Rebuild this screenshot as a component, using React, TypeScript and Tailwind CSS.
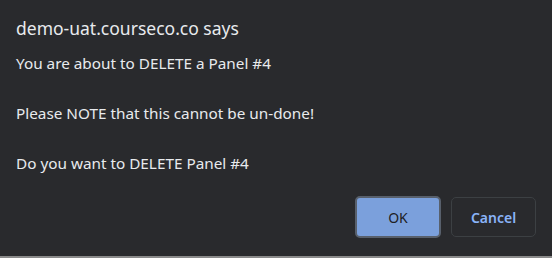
import React from "react";

export default function App() {
  return (
    <div
      className="w-[552px] h-[258px] bg-[#292a2d] flex flex-col border-b-2 border-[#8a8a8a]"
      style={{ fontFamily: '"Noto Sans", "Open Sans", sans-serif' }}
    >
      <div className="pl-4 pt-[14px] text-[17.5px] leading-[28px] text-[#e8eaed]">
        demo-uat.courseco.co says
      </div>
      <div className="pl-4 pt-[9px] text-[15.3px] leading-[25px] text-[#e8eaed]">
        <div>You are about to DELETE a Panel #4</div>
        <div>&nbsp;</div>
        <div>Please NOTE that this cannot be un-done!</div>
        <div>&nbsp;</div>
        <div>Do you want to DELETE Panel #4</div>
      </div>
      <div className="flex justify-end gap-[10px] pr-4 mt-auto mb-[18px]">
        <button className="w-[86px] h-[42px] rounded-[5px] bg-[#7ba0dc] border-2 border-[#58606c] text-[#202124] text-[14px]">
          OK
        </button>
        <button className="w-[85px] h-[40px] mt-[1px] rounded-[5px] bg-[#292a2d] border border-[#3c4043] text-[#8ab4f8] text-[14px] font-semibold">
          Cancel
        </button>
      </div>
    </div>
  );
}
